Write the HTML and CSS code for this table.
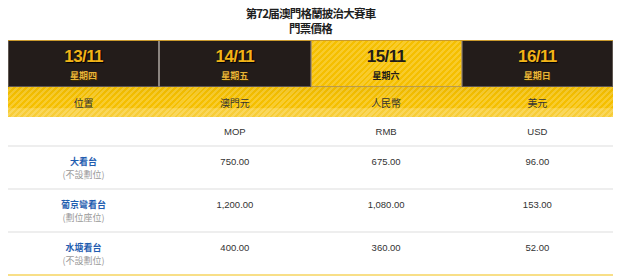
FILE: index.html
```html
<!DOCTYPE html>
<html lang="zh-Hant">
<head>
<meta charset="utf-8">
<link rel="stylesheet" href="styles.css">
</head>
<body>
<div class="page">
  <h1 class="title">第72届澳門格蘭披治大賽車<br>門票價格</h1>
  <div class="tabs">
    <div class="tab"><div class="date">13/11</div><div class="day">星期四</div></div>
    <div class="tab"><div class="date">14/11</div><div class="day">星期五</div></div>
    <div class="tab active"><div class="date">15/11</div><div class="day">星期六</div></div>
    <div class="tab"><div class="date">16/11</div><div class="day">星期日</div></div>
  </div>
  <div class="head row">
    <div>位置</div><div>澳門元</div><div>人民幣</div><div>美元</div>
  </div>
  <div class="codes row">
    <div></div><div>MOP</div><div>RMB</div><div>USD</div>
  </div>
  <div class="data row">
    <div><div class="name">大看台</div><div class="note">(不設劃位)</div></div>
    <div>750.00</div><div>675.00</div><div>96.00</div>
  </div>
  <div class="data row">
    <div><div class="name">葡京彎看台</div><div class="note">(劃位座位)</div></div>
    <div>1,200.00</div><div>1,080.00</div><div>153.00</div>
  </div>
  <div class="data row last">
    <div><div class="name">水塘看台</div><div class="note">(不設劃位)</div></div>
    <div>400.00</div><div>360.00</div><div>52.00</div>
  </div>
</div>
</body>
</html>
```
FILE: styles.css
```css
html, body {
  margin: 0;
  padding: 0;
  background: #ffffff;
}
body {
  font-family: "Liberation Sans", Arial, "Noto Sans CJK TC", sans-serif;
  color: #333;
}
.page {
  width: 605px;
  margin-left: 8px;
  padding-top: 6px;
}
.title {
  margin: 0 0 4px 0;
  text-align: center;
  font-family: "Noto Sans CJK TC", sans-serif;
  font-size: 11.5px;
  line-height: 15px;
  letter-spacing: -0.8px;
  font-weight: 700;
  color: #1e1e1e;
}
.tabs {
  display: grid;
  grid-template-columns: repeat(4, 1fr);
  border-top: 1px solid #c99a2e;
  height: 46px;
}
.tab {
  background: #231c1a;
  border: 1px solid #5e5650;
  border-top: none;
  text-align: center;
  box-sizing: border-box;
}
.tab:nth-child(1) { border-right: 1px solid #8c8580; }
.tab:nth-child(2) { border-left: 1px solid #8c8580; }
.tab.active {
  background: repeating-linear-gradient(135deg, #f5bf00 0 2px, #f8cb2c 2px 4.2px);
  border-color: #b89a50;
}
.date {
  font-family: "Liberation Sans", Arial, sans-serif;
  font-size: 17px;
  font-weight: 700;
  letter-spacing: -0.6px;
  line-height: 20px;
  margin-top: 6px;
  color: #f2b418;
  text-shadow: 1px 1px 1px #000;
}
.day {
  font-family: "Noto Sans CJK TC", sans-serif;
  font-size: 9px;
  font-weight: 700;
  line-height: 12px;
  margin-top: 3px;
  color: #e8b33a;
  text-shadow: 1px 1px 0 #3a2a00;
}
.active .date, .active .day {
  color: #231c1a;
  text-shadow: none;
}
.row {
  display: grid;
  grid-template-columns: repeat(4, 1fr);
  text-align: center;
  font-size: 9.5px;
}
.head {
  height: 30px;
  align-items: center;
  font-family: "Noto Sans CJK TC", sans-serif;
  font-size: 10px;
  color: #333;
  background:
    linear-gradient(to bottom, rgba(0,0,0,0.04) 0, rgba(255,255,255,0) 40%, rgba(255,255,255,0) 70%, rgba(255,255,255,0.22) 72%, rgba(255,255,255,0.22) 100%),
    repeating-linear-gradient(135deg, #f5bf00 0 2px, #f8cc30 2px 4.2px);
}
.codes {
  height: 28px;
  align-items: center;
  border-bottom: 2px solid #eeeeee;
}
.data {
  height: 41px;
  padding-top: 8px;
  box-sizing: border-box;
  line-height: 13px;
  border-bottom: 2px solid #eeeeee;
  height: 43px;
}
.data.last {
  border-bottom: 2px solid #f8df88;
}
.name {
  font-family: "Noto Sans CJK TC", sans-serif;
  font-weight: 700;
  font-size: 9px;
  color: #1f5db0;
}
.note {
  font-family: "Noto Sans CJK TC", sans-serif;
  font-size: 9px;
  color: #999;
}
```
